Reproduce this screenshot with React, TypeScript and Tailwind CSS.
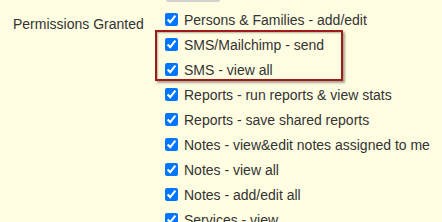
import React from "react";

const items = [
  "Persons & Families - add/edit",
  "SMS/Mailchimp - send",
  "SMS - view all",
  "Reports - run reports & view stats",
  "Reports - save shared reports",
  "Notes - view&edit notes assigned to me",
  "Notes - view all",
  "Notes - add/edit all",
  "Services - view",
];

export default function App() {
  return (
    <div
      className="w-full h-[222px] overflow-hidden bg-[#fffde1] text-[#333] text-[14px] leading-4"
      style={{ fontFamily: '"Liberation Sans", Arial, sans-serif' }}
    >
      <div className="ml-[166px] w-[54px] h-[2px] bg-[#d2d2d2] rounded-b-[3px]" />
      <div className="flex pt-[5px]">
        <div className="w-[165px] shrink-0 pl-[13px] pt-[9px]">Permissions Granted</div>
        <div className="relative flex flex-col">
          {items.map((t) => (
            <label key={t} className="h-[25px] flex items-center gap-[6px] whitespace-nowrap">
              <input type="checkbox" checked readOnly className="m-0 w-[13px] h-[13px] shrink-0" />
              <span>{t}</span>
            </label>
          ))}
          <div className="absolute left-[-10px] top-[23px] w-[188px] h-[51px] border-2 border-[#9e1b1b] shadow-[2px_2px_2px_rgba(0,0,0,0.35),inset_1px_1px_2px_rgba(0,0,0,0.3)] pointer-events-none" />
        </div>
      </div>
    </div>
  );
}
